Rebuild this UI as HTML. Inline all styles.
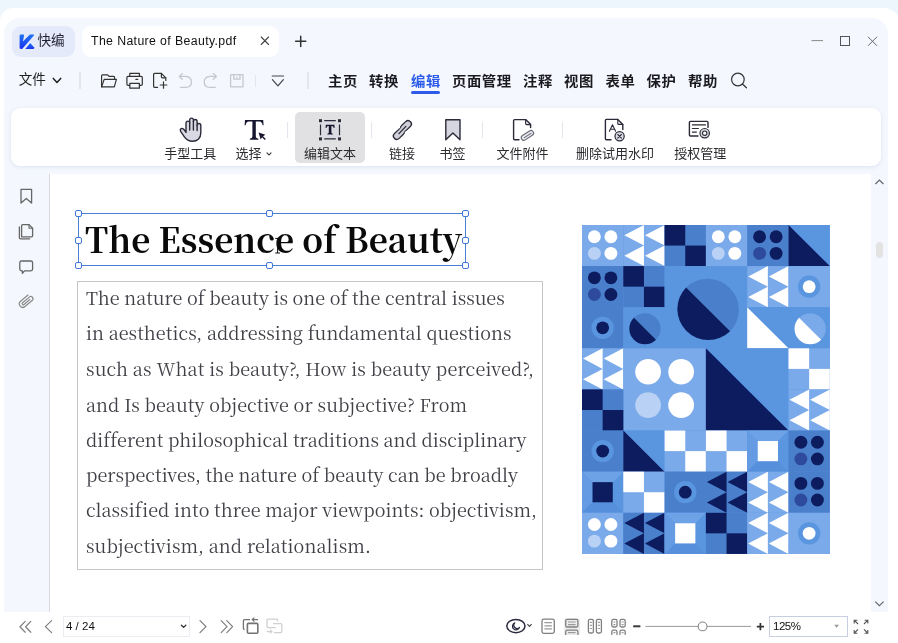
<!DOCTYPE html>
<html lang="zh-CN">
<head>
<meta charset="utf-8">
<title>The Nature of Beauty.pdf</title>
<style>
*{box-sizing:border-box;margin:0;padding:0}
html,body{width:898px;height:643px;overflow:hidden}
body{position:relative;background:#edf6fd;font-family:"Liberation Sans","Noto Sans CJK SC",sans-serif;color:#222;font-size:13px}
.abs{position:absolute}
#wrap{position:absolute;left:0;top:0;width:898px;height:643px;will-change:transform}
#frame{left:0;top:8px;width:900px;height:640px;background:#fff;border-radius:13px 16px 0 0}
#inner{left:4px;top:18px;width:884px;height:594px;background:#f4f7fd;border-radius:16px 16px 0 0}
#logotab{left:12px;top:26px;width:63px;height:31px;border-radius:9px;background:#e5eafb}
#doctab{left:82px;top:26px;width:197px;height:31px;border-radius:9px;background:#fff}
.cn{font-family:"Liberation Sans","Noto Sans CJK SC",sans-serif}
.t{position:absolute;white-space:nowrap;line-height:1}
.menu{font-weight:700;font-size:14.4px;color:#1b1b1f;letter-spacing:.5px;transform:scaleY(.92);transform-origin:0 50%}
#ribbon{left:11px;top:108px;width:870px;height:58px;background:#fff;border-radius:9px;box-shadow:0 1px 4px rgba(120,140,200,.18)}
#sel{left:295px;top:112px;width:70px;height:51px;background:#e1e1e3;border-radius:5px}
.lbl{font-size:13px;color:#2c2c30}
.sep{position:absolute;width:1px;background:#e4e6ed}
#page{left:49px;top:174px;width:822px;height:438px;background:#fff;border-left:1px solid #d9dae0}
#scroll{left:871px;top:174px;width:17px;height:438px;background:#f4f7fd}
.serif{font-family:"Noto Serif CJK SC","Liberation Serif",serif}
#title{left:85.3px;top:221px;font-size:34.5px;font-weight:700;color:#0a0a0a;transform-origin:0 0;transform:scaleX(.968)}
.bl{left:86px;font-size:18px;color:#3f3f46}
#tbox{left:77px;top:281px;width:466px;height:289px;border:1px solid #c6c6c6}
#selbox{left:78px;top:213px;width:388px;height:53px;border:1px solid #4a7fd6}
.h{position:absolute;width:7px;height:7px;border:1.2px solid #3f78d8;background:#fff;border-radius:2px}
svg{position:absolute;overflow:visible}
#ov{left:0;top:0}
.ic{fill:none;stroke:#333;stroke-width:1.2;stroke-linecap:round;stroke-linejoin:round}
.icg{fill:none;stroke:#c6c8ce;stroke-width:1.3;stroke-linecap:round;stroke-linejoin:round}
.rb{fill:none;stroke:#2a2a38;stroke-width:1.4;stroke-linecap:round;stroke-linejoin:round}
.sb{fill:none;stroke:#666;stroke-width:1.3;stroke-linecap:round;stroke-linejoin:round}
.st{fill:none;stroke:#808080;stroke-width:1.2;stroke-linecap:round;stroke-linejoin:round}
</style>
</head>
<body>
<div id="wrap">
<div id="frame" class="abs"></div>
<div id="inner" class="abs"></div>

<!-- title bar -->
<div id="logotab" class="abs"></div>
<div id="doctab" class="abs"></div>
<div class="t cn" style="left:37.4px;top:34.2px;font-size:13.6px;color:#1f2330">快编</div>
<div class="t" style="left:91px;top:35px;font-size:12.3px;color:#111;letter-spacing:.38px">The Nature of Beauty.pdf</div>

<!-- menu row -->
<div class="t cn" style="left:18.7px;top:73.2px;font-size:13.6px;color:#222">文件</div>
<div class="sep" style="left:79.4px;top:72px;height:17px;width:1.3px"></div>
<div class="sep" style="left:255px;top:75px;height:12px"></div>
<div class="sep" style="left:307px;top:72px;height:17px;width:1.5px"></div>
<div class="t cn menu" style="left:328px;top:74px">主页</div>
<div class="t cn menu" style="left:369px;top:74px">转换</div>
<div class="t cn menu" style="left:411px;top:74px;color:#2b5be8">编辑</div>
<div class="t cn menu" style="left:452px;top:74px">页面管理</div>
<div class="t cn menu" style="left:523px;top:74px">注释</div>
<div class="t cn menu" style="left:564px;top:74px">视图</div>
<div class="t cn menu" style="left:605.5px;top:74px">表单</div>
<div class="t cn menu" style="left:646.5px;top:74px">保护</div>
<div class="t cn menu" style="left:688px;top:74px">帮助</div>
<div class="abs" style="left:411px;top:91.2px;width:29px;height:2.7px;border-radius:2px;background:#2b5be8"></div>

<!-- ribbon -->
<div id="ribbon" class="abs"></div>
<div id="sel" class="abs"></div>
<div class="sep" style="left:287px;top:122px;height:16px"></div>
<div class="sep" style="left:371px;top:122px;height:16px"></div>
<div class="sep" style="left:482px;top:122px;height:16px"></div>
<div class="sep" style="left:562px;top:122px;height:16px"></div>
<div class="t cn lbl" style="left:164.2px;top:147px">手型工具</div>
<div class="t cn lbl" style="left:235.4px;top:147px">选择</div>
<div class="t cn lbl" style="left:303.9px;top:147px">编辑文本</div>
<div class="t cn lbl" style="left:388.9px;top:147px">链接</div>
<div class="t cn lbl" style="left:439.6px;top:147px">书签</div>
<div class="t cn lbl" style="left:496.6px;top:147px">文件附件</div>
<div class="t cn lbl" style="left:576.1px;top:147px">删除试用水印</div>
<div class="t cn lbl" style="left:674.3px;top:147px">授权管理</div>

<!-- document area -->
<div id="page" class="abs"></div>
<div id="scroll" class="abs"></div>
<div class="abs" style="left:876px;top:242px;width:7px;height:16px;border-radius:4px;background:#e3e3e3"></div>
<div id="tbox" class="abs"></div>
<div id="selbox" class="abs"></div>
<div class="h" style="left:75px;top:210px"></div>
<div class="h" style="left:266px;top:210px"></div>
<div class="h" style="left:462px;top:210px"></div>
<div class="h" style="left:75px;top:237px"></div>
<div class="h" style="left:462px;top:237px"></div>
<div class="h" style="left:75px;top:262px"></div>
<div class="h" style="left:266px;top:262px"></div>
<div class="h" style="left:462px;top:262px"></div>
<div id="title" class="t serif">The Essence of Beauty</div>
<div class="t serif bl" style="top:288px">The nature of beauty is one of the central issues</div>
<div class="t serif bl" style="top:323px;letter-spacing:0.052px">in aesthetics, addressing fundamental questions</div>
<div class="t serif bl" style="top:359px;letter-spacing:0.135px">such as What is beauty?, How is beauty perceived?,</div>
<div class="t serif bl" style="top:395px;letter-spacing:0.09px">and Is beauty objective or subjective? From</div>
<div class="t serif bl" style="top:430px;letter-spacing:0.02px">different philosophical traditions and disciplinary</div>
<div class="t serif bl" style="top:465px;letter-spacing:0.02px">perspectives, the nature of beauty can be broadly</div>
<div class="t serif bl" style="top:500px;letter-spacing:0.045px">classified into three major viewpoints: objectivism,</div>
<div class="t serif bl" style="top:536px;letter-spacing:0.085px">subjectivism, and relationalism.</div>
<svg id="art" style="left:582.4px;top:224.8px;overflow:hidden" width="247.8" height="328.9" preserveAspectRatio="none" viewBox="0 0 246.6 328.8"><rect x="0" y="0" width="246.6" height="328.8" fill="#5a95e0"/><rect x="0" y="0" width="41.1" height="41.1" fill="#7aaae9"/><circle cx="12.33" cy="11.71" r="6.41" fill="#ffffff"/><circle cx="28.77" cy="11.71" r="6.41" fill="#ffffff"/><circle cx="12.33" cy="28.36" r="6.41" fill="#b8d1f4"/><circle cx="28.77" cy="28.36" r="6.41" fill="#ffffff"/><rect x="41.1" y="0" width="41.1" height="41.1" fill="#7aaae9"/><path d="M61.65 0L61.65 20.55L42.1 10.28z" fill="#ffffff"/><path d="M61.65 20.55L61.65 41.1L42.1 30.83z" fill="#ffffff"/><path d="M82.2 0L82.2 20.55L62.65 10.28z" fill="#ffffff"/><path d="M82.2 20.55L82.2 41.1L62.65 30.83z" fill="#ffffff"/><rect x="82.2" y="0" width="41.1" height="41.1" fill="#4a7fcc"/><rect x="82.2" y="0" width="20.55" height="20.55" fill="#0c1c5e"/><rect x="102.75" y="20.55" width="20.55" height="20.55" fill="#0c1c5e"/><rect x="123.3" y="0" width="41.1" height="41.1" fill="#7aaae9"/><circle cx="135.63" cy="11.71" r="6.41" fill="#ffffff"/><circle cx="152.07" cy="11.71" r="6.41" fill="#ffffff"/><circle cx="135.63" cy="28.36" r="6.41" fill="#b8d1f4"/><circle cx="152.07" cy="28.36" r="6.41" fill="#ffffff"/><rect x="164.4" y="0" width="41.1" height="41.1" fill="#4a7fcc"/><circle cx="176.73" cy="11.71" r="6.41" fill="#0c1c5e"/><circle cx="193.17" cy="11.71" r="6.41" fill="#0c1c5e"/><circle cx="176.73" cy="28.36" r="6.41" fill="#2e4a9c"/><circle cx="193.17" cy="28.36" r="6.41" fill="#0c1c5e"/><rect x="205.5" y="0" width="41.1" height="41.1" fill="#5a95e0"/><path d="M205.5 0L205.5 41.1L246.6 41.1z" fill="#0c1c5e"/><rect x="0" y="41.1" width="41.1" height="41.1" fill="#4a7fcc"/><circle cx="12.33" cy="52.81" r="6.41" fill="#0c1c5e"/><circle cx="28.77" cy="52.81" r="6.41" fill="#0c1c5e"/><circle cx="12.33" cy="69.46" r="6.41" fill="#2e4a9c"/><circle cx="28.77" cy="69.46" r="6.41" fill="#0c1c5e"/><rect x="41.1" y="41.1" width="41.1" height="41.1" fill="#4a7fcc"/><rect x="41.1" y="41.1" width="20.55" height="20.55" fill="#0c1c5e"/><rect x="61.65" y="61.65" width="20.55" height="20.55" fill="#0c1c5e"/><rect x="82.2" y="41.1" width="82.2" height="82.2" fill="#5a95e0"/><path d="M103.59 62.49A30.99 30.99 0 0 1 147.41 106.31z" fill="#4a7fcc"/><path d="M147.41 106.31A30.99 30.99 0 0 1 103.59 62.49z" fill="#0c1c5e"/><rect x="164.4" y="41.1" width="41.1" height="41.1" fill="#7aaae9"/><path d="M184.95 41.1L184.95 61.65L165.4 51.38z" fill="#ffffff"/><path d="M184.95 61.65L184.95 82.2L165.4 71.93z" fill="#ffffff"/><path d="M205.5 41.1L205.5 61.65L185.95 51.38z" fill="#ffffff"/><path d="M205.5 61.65L205.5 82.2L185.95 71.93z" fill="#ffffff"/><rect x="205.5" y="41.1" width="41.1" height="41.1" fill="#7aaae9"/><circle cx="226.05" cy="61.65" r="11.1" fill="#5a95e0"/><circle cx="226.05" cy="61.65" r="6.37" fill="#ffffff"/><rect x="0" y="82.2" width="41.1" height="41.1" fill="#4a7fcc"/><circle cx="20.55" cy="102.75" r="11.1" fill="#5a95e0"/><circle cx="20.55" cy="102.75" r="6.37" fill="#0c1c5e"/><rect x="41.1" y="82.2" width="41.1" height="41.1" fill="#5a95e0"/><path d="M51.66 92.76A15.54 15.54 0 0 1 73.64 114.74z" fill="#4a7fcc"/><path d="M73.64 114.74A15.54 15.54 0 0 1 51.66 92.76z" fill="#0c1c5e"/><rect x="164.4" y="82.2" width="41.1" height="41.1" fill="#5a95e0"/><path d="M164.4 82.2L164.4 123.3L205.5 123.3z" fill="#ffffff"/><rect x="205.5" y="82.2" width="41.1" height="41.1" fill="#5a95e0"/><path d="M216.06 92.76A15.54 15.54 0 0 1 238.04 114.74z" fill="#7aaae9"/><path d="M238.04 114.74A15.54 15.54 0 0 1 216.06 92.76z" fill="#ffffff"/><rect x="0" y="123.3" width="41.1" height="41.1" fill="#7aaae9"/><path d="M20.55 123.3L20.55 143.85L1 133.58z" fill="#ffffff"/><path d="M20.55 143.85L20.55 164.4L1 154.13z" fill="#ffffff"/><path d="M41.1 123.3L41.1 143.85L21.55 133.58z" fill="#ffffff"/><path d="M41.1 143.85L41.1 164.4L21.55 154.13z" fill="#ffffff"/><rect x="41.1" y="123.3" width="82.2" height="82.2" fill="#7aaae9"/><circle cx="65.76" cy="146.73" r="12.82" fill="#ffffff"/><circle cx="98.64" cy="146.73" r="12.82" fill="#ffffff"/><circle cx="65.76" cy="180.02" r="12.82" fill="#b8d1f4"/><circle cx="98.64" cy="180.02" r="12.82" fill="#ffffff"/><rect x="123.3" y="123.3" width="82.2" height="82.2" fill="#5a95e0"/><path d="M123.3 123.3L123.3 205.5L205.5 205.5z" fill="#0c1c5e"/><rect x="205.5" y="123.3" width="41.1" height="41.1" fill="#7aaae9"/><rect x="205.5" y="123.3" width="20.55" height="20.55" fill="#ffffff"/><rect x="226.05" y="143.85" width="20.55" height="20.55" fill="#ffffff"/><rect x="0" y="164.4" width="41.1" height="41.1" fill="#4a7fcc"/><rect x="0" y="164.4" width="20.55" height="20.55" fill="#0c1c5e"/><rect x="20.55" y="184.95" width="20.55" height="20.55" fill="#0c1c5e"/><rect x="205.5" y="164.4" width="41.1" height="41.1" fill="#7aaae9"/><path d="M226.05 164.4L226.05 184.95L206.5 174.68z" fill="#ffffff"/><path d="M226.05 184.95L226.05 205.5L206.5 195.23z" fill="#ffffff"/><path d="M246.6 164.4L246.6 184.95L227.05 174.68z" fill="#ffffff"/><path d="M246.6 184.95L246.6 205.5L227.05 195.23z" fill="#ffffff"/><rect x="0" y="205.5" width="41.1" height="41.1" fill="#4a7fcc"/><circle cx="20.55" cy="226.05" r="11.1" fill="#5a95e0"/><circle cx="20.55" cy="226.05" r="6.37" fill="#0c1c5e"/><rect x="41.1" y="205.5" width="41.1" height="41.1" fill="#5a95e0"/><path d="M41.1 205.5L41.1 246.6L82.2 246.6z" fill="#0c1c5e"/><rect x="82.2" y="205.5" width="41.1" height="41.1" fill="#7aaae9"/><rect x="82.2" y="205.5" width="20.55" height="20.55" fill="#ffffff"/><rect x="102.75" y="226.05" width="20.55" height="20.55" fill="#ffffff"/><rect x="123.3" y="205.5" width="41.1" height="41.1" fill="#7aaae9"/><rect x="123.3" y="205.5" width="20.55" height="20.55" fill="#ffffff"/><rect x="143.85" y="226.05" width="20.55" height="20.55" fill="#ffffff"/><rect x="164.4" y="205.5" width="41.1" height="41.1" fill="#5a95e0"/><path d="M164.4 205.5L205.5 205.5L195.02 215.98L174.88 215.98z" fill="#6ea2e6"/><path d="M164.4 205.5L174.88 215.98L174.88 236.12L164.4 246.6z" fill="#659be3"/><path d="M164.4 246.6L205.5 246.6L195.02 236.12L174.88 236.12z" fill="#5690dc"/><rect x="174.88" y="215.98" width="20.14" height="20.14" fill="#ffffff"/><rect x="205.5" y="205.5" width="41.1" height="41.1" fill="#4a7fcc"/><circle cx="217.83" cy="217.21" r="6.41" fill="#0c1c5e"/><circle cx="234.27" cy="217.21" r="6.41" fill="#0c1c5e"/><circle cx="217.83" cy="233.86" r="6.41" fill="#2e4a9c"/><circle cx="234.27" cy="233.86" r="6.41" fill="#0c1c5e"/><rect x="0" y="246.6" width="41.1" height="41.1" fill="#5a95e0"/><path d="M0 246.6L41.1 246.6L30.62 257.08L10.48 257.08z" fill="#6ea2e6"/><path d="M0 246.6L10.48 257.08L10.48 277.22L0 287.7z" fill="#659be3"/><path d="M0 287.7L41.1 287.7L30.62 277.22L10.48 277.22z" fill="#5690dc"/><rect x="10.48" y="257.08" width="20.14" height="20.14" fill="#0c1c5e"/><rect x="41.1" y="246.6" width="41.1" height="41.1" fill="#7aaae9"/><rect x="41.1" y="246.6" width="20.55" height="20.55" fill="#ffffff"/><rect x="61.65" y="267.15" width="20.55" height="20.55" fill="#ffffff"/><rect x="82.2" y="246.6" width="41.1" height="41.1" fill="#4a7fcc"/><circle cx="102.75" cy="267.15" r="11.1" fill="#5a95e0"/><circle cx="102.75" cy="267.15" r="6.37" fill="#0c1c5e"/><rect x="123.3" y="246.6" width="41.1" height="41.1" fill="#4a7fcc"/><path d="M143.85 246.6L143.85 267.15L124.3 256.88z" fill="#0c1c5e"/><path d="M143.85 267.15L143.85 287.7L124.3 277.43z" fill="#0c1c5e"/><path d="M164.4 246.6L164.4 267.15L144.85 256.88z" fill="#0c1c5e"/><path d="M164.4 267.15L164.4 287.7L144.85 277.43z" fill="#0c1c5e"/><rect x="164.4" y="246.6" width="41.1" height="41.1" fill="#7aaae9"/><path d="M184.95 246.6L184.95 267.15L165.4 256.88z" fill="#ffffff"/><path d="M184.95 267.15L184.95 287.7L165.4 277.43z" fill="#ffffff"/><path d="M205.5 246.6L205.5 267.15L185.95 256.88z" fill="#ffffff"/><path d="M205.5 267.15L205.5 287.7L185.95 277.43z" fill="#ffffff"/><rect x="205.5" y="246.6" width="41.1" height="41.1" fill="#4a7fcc"/><circle cx="217.83" cy="258.31" r="6.41" fill="#0c1c5e"/><circle cx="234.27" cy="258.31" r="6.41" fill="#0c1c5e"/><circle cx="217.83" cy="274.96" r="6.41" fill="#2e4a9c"/><circle cx="234.27" cy="274.96" r="6.41" fill="#0c1c5e"/><rect x="0" y="287.7" width="41.1" height="41.1" fill="#7aaae9"/><circle cx="12.33" cy="299.41" r="6.41" fill="#ffffff"/><circle cx="28.77" cy="299.41" r="6.41" fill="#ffffff"/><circle cx="12.33" cy="316.06" r="6.41" fill="#b8d1f4"/><circle cx="28.77" cy="316.06" r="6.41" fill="#ffffff"/><rect x="41.1" y="287.7" width="41.1" height="41.1" fill="#4a7fcc"/><path d="M61.65 287.7L61.65 308.25L42.1 297.97z" fill="#0c1c5e"/><path d="M61.65 308.25L61.65 328.8L42.1 318.52z" fill="#0c1c5e"/><path d="M82.2 287.7L82.2 308.25L62.65 297.97z" fill="#0c1c5e"/><path d="M82.2 308.25L82.2 328.8L62.65 318.52z" fill="#0c1c5e"/><rect x="82.2" y="287.7" width="41.1" height="41.1" fill="#5a95e0"/><path d="M82.2 287.7L123.3 287.7L112.82 298.18L92.68 298.18z" fill="#6ea2e6"/><path d="M82.2 287.7L92.68 298.18L92.68 318.32L82.2 328.8z" fill="#659be3"/><path d="M82.2 328.8L123.3 328.8L112.82 318.32L92.68 318.32z" fill="#5690dc"/><rect x="92.68" y="298.18" width="20.14" height="20.14" fill="#ffffff"/><rect x="123.3" y="287.7" width="41.1" height="41.1" fill="#4a7fcc"/><rect x="123.3" y="287.7" width="20.55" height="20.55" fill="#0c1c5e"/><rect x="143.85" y="308.25" width="20.55" height="20.55" fill="#0c1c5e"/><rect x="164.4" y="287.7" width="41.1" height="41.1" fill="#7aaae9"/><path d="M184.95 287.7L184.95 308.25L165.4 297.97z" fill="#ffffff"/><path d="M184.95 308.25L184.95 328.8L165.4 318.52z" fill="#ffffff"/><path d="M205.5 287.7L205.5 308.25L185.95 297.97z" fill="#ffffff"/><path d="M205.5 308.25L205.5 328.8L185.95 318.52z" fill="#ffffff"/><rect x="205.5" y="287.7" width="41.1" height="41.1" fill="#7aaae9"/><circle cx="226.05" cy="308.25" r="11.1" fill="#5a95e0"/><circle cx="226.05" cy="308.25" r="6.37" fill="#ffffff"/></svg>

<!-- status bar -->
<div class="abs" style="left:63px;top:616px;width:127px;height:21px;background:#fff;border:1px solid #eaecf2"></div>
<div class="t" style="left:66px;top:621px;font-size:11.5px;color:#111">4 / 24</div>
<div class="abs" style="left:563.5px;top:617.5px;width:16.5px;height:17.5px;background:#ececec;border-radius:2px"></div>
<div class="abs" style="left:769px;top:616px;width:79px;height:21px;background:#fff;border:1px solid #c9cde0"></div>
<div class="t" style="left:773px;top:620.8px;font-size:11.5px;color:#111;letter-spacing:-.5px">125%</div>

<svg id="ov" width="898" height="643" viewBox="0 0 898 643">
<defs><linearGradient id="kg" x1="0" y1="0" x2="0" y2="1"><stop offset="0" stop-color="#1f74f5"/><stop offset="1" stop-color="#1a34ee"/></linearGradient></defs>
<!-- logo -->
<path d="M20.7 34.4H23.2Q24.3 34.4 24.1 35.5L22.9 41.4L29.9 34.4H33.5Q34.6 34.4 33.9 35.6L22.6 48.4Q22.2 48.9 21.4 48.9H20.7Q19.6 48.9 19.6 47.8V35.5Q19.6 34.4 20.7 34.4z" fill="url(#kg)"/>
<path d="M30.2 42.9L34 47.3Q34.6 48.9 33.3 48.9H25.3z" fill="url(#kg)"/>
<!-- tab close / plus / window controls -->
<path class="ic" style="stroke-width:1.1;stroke:#444" d="M261.2 37L268.6 44.5M268.6 37L261.2 44.5"/>
<path class="ic" style="stroke-width:1.5" d="M295.6 41.3H305.8M300.7 36.2V46.4"/>
<path d="M811.5 40.6H823" stroke="#8a8a8a" stroke-width="1" fill="none"/>
<rect x="840.5" y="36.5" width="9" height="9" stroke="#555" stroke-width="1" fill="none"/>
<path d="M868 36.8L877 45.8M877 36.8L868 45.8" stroke="#666" stroke-width="1" fill="none"/>
<!-- file chevron -->
<path class="ic" style="stroke:#222;stroke-width:1.5" d="M53.3 78.4L57 82.4L60.7 78.4"/>
<!-- folder -->
<path class="ic" d="M101.6 86.8V75.8Q101.6 74.8 102.6 74.8H107.6L109 76.4H113.6Q114.6 76.4 114.6 77.4V79.3"/>
<path class="ic" d="M104.2 79.4H116.4L114.3 86.9H101.6z"/>
<!-- printer -->
<path class="ic" d="M129.8 76.3V73.3H139.4V76.3"/>
<path class="ic" d="M129.8 85.3H128Q126.9 85.3 126.9 84.2V77.4Q126.9 76.3 128 76.3H141.2Q142.3 76.3 142.3 77.4V84.2Q142.3 85.3 141.2 85.3H139.4"/>
<path class="ic" d="M129.8 83.3H139.4V88.2H129.8z"/>
<path class="ic" d="M135.8 79.3H137.8"/>
<!-- new doc -->
<path class="ic" d="M157.6 87.3H154.6Q153.6 87.3 153.6 86.3V74.4Q153.6 73.4 154.6 73.4H161.4L165.8 77.8V80.4"/>
<path class="ic" d="M161.4 73.4V76.8Q161.4 77.8 162.4 77.8H165.8"/>
<path class="ic" d="M160.2 85H166.8M163.5 81.8V88.2"/>
<!-- undo / redo -->
<path class="icg" d="M182.4 73.6L179.2 76.4L182.4 79.2M179.4 76.4H185.6Q191.4 76.8 191.4 82Q191.4 87.2 185.6 87.4H180.4"/>
<path class="icg" d="M213.2 73.6L216.4 76.4L213.2 79.2M216.2 76.4H210Q204.2 76.8 204.2 82Q204.2 87.2 210 87.4H215.2"/>
<!-- save -->
<path class="icg" d="M230.6 74.6H243V86.8H230.6z"/>
<path class="icg" d="M233.8 74.6V79.2H240V74.6"/>
<path class="icg" d="M236.6 77.2H237.2"/>
<!-- dropdown -->
<path class="ic" style="stroke:#444" d="M272.2 76H283.6M272.4 79.6L277.9 85.9L283.4 79.6"/>
<!-- search -->
<circle class="ic" cx="737.9" cy="79.5" r="6.3"/><path class="ic" d="M742.5 84L746.4 87.8"/>

<!-- hand -->
<path class="rb" style="fill:#d9d9e3" d="M186 132.4V123a1.85 1.85 0 0 1 3.7 0V120a1.85 1.85 0 0 1 3.7 0V121.4a1.85 1.85 0 0 1 3.7 0V125.4a1.85 1.85 0 0 1 3.7 0V133C200.8 138.6 197 141.2 192.6 141.2C188.8 141.2 186.4 139.8 184.4 136.8L180.8 131.6Q179.6 129.6 181.2 128.7Q182.8 128 184.2 129.8z"/>
<path class="rb" d="M189.7 123V130M193.4 121.4V130M197.1 125.4V130.6"/>
<!-- T select -->
<path d="M245 120H263.2L263.6 125.2H262.6Q262 121.6 259.4 121.5H255.8V136.6Q255.8 138.6 258.4 138.8V139.8H249.8V138.8Q252.4 138.6 252.4 136.6V121.5H248.8Q246.2 121.6 245.6 125.2H244.6z" fill="#15152e"/>
<path d="M258.6 132.6L265.4 134.8L263 136.2L265.8 139L264.8 140L262 137.2L260.6 139.6z" fill="#15152e"/>
<path class="ic" style="stroke-width:1.1" d="M267 152.8L269 155L271 152.8"/>
<!-- edit text -->
<rect x="320.5" y="120.7" width="19" height="18.2" fill="#dbdbe3"/><g fill="#2a2a38"><rect x="319" y="119.2" width="3" height="3"/><rect x="338" y="119.2" width="3" height="3"/><rect x="319" y="137.4" width="3" height="3"/><rect x="338" y="137.4" width="3" height="3"/></g>
<path d="M324.2 120.7H335.8M324.2 138.9H335.8M320.5 124.4V135.2M339.5 124.4V135.2" stroke="#2a2a38" stroke-width="1.2" fill="none"/>
<path d="M325.8 124.8H334.4L334.6 128H333.8Q333.4 126 331.8 125.9H331.4V132.6Q331.4 133.6 332.8 133.7V134.6H327.4V133.7Q328.8 133.6 328.8 132.6V125.9H328.4Q326.8 126 326.4 128H325.6z" fill="#15152e"/>
<!-- link -->
<g transform="translate(402.4 130) rotate(-43)"><rect x="-11.5" y="-2.9" width="12" height="6.8" rx="3.4" class="rb" style="fill:#d0d0da;stroke-width:1.3"/><rect x="-0.5" y="-3.9" width="12" height="6.8" rx="3.4" class="rb" style="fill:#d0d0da;stroke-width:1.3"/><path d="M-2.6 -2.1L3 -3.1V1.9L-2.6 3z" fill="#d0d0da"/><path class="rb" style="stroke-width:1.3" d="M-5 0.3L5 -0.3"/></g>
<!-- bookmark -->
<path class="rb" style="fill:#d6d6e0" d="M445.8 119.8H460V139.8L452.9 133L445.8 139.8z"/>
<!-- attach doc -->
<path class="rb" d="M519 139.8H514.6Q513.6 139.8 513.6 138.8V120.6Q513.6 119.6 514.6 119.6H525.6L530.6 124.6V127.6"/>
<path class="rb" style="fill:#e4e4ea;stroke-width:1.1" d="M525.6 119.6V123.6Q525.6 124.6 526.6 124.6H530.6z"/>
<g transform="translate(527.4 135.4) rotate(-33)"><rect x="-6.8" y="-2.6" width="13.6" height="5.2" rx="2.6" fill="#e8e8ee" stroke="#666a75" stroke-width="1.1"/><path d="M-4.2 0.2H4.6" stroke="#666a75" stroke-width="1" fill="none"/></g>
<!-- remove watermark -->
<path class="rb" d="M611 139.8H606.4Q605.4 139.8 605.4 138.8V120.4Q605.4 119.4 606.4 119.4H617.8L622.8 124.4V129.6"/>
<path class="rb" style="stroke-width:1.1" d="M617.8 119.4V123.4Q617.8 124.4 618.8 124.4H622.8"/>
<path class="rb" style="stroke-width:1.1" d="M609.4 131.2L612.5 124.8L615.6 131.2M610.4 129.2H614.6"/>
<circle cx="619.6" cy="136.3" r="4.6" class="rb" style="fill:#dcdce4;stroke-width:1.2"/>
<path class="rb" style="stroke-width:1.1" d="M617.8 134.5L621.4 138.1M621.4 134.5L617.8 138.1"/>
<!-- license -->
<path class="rb" d="M698 136H690.4Q689.4 136 689.4 135V122.4Q689.4 121.4 690.4 121.4H707Q708 121.4 708 122.4V127.4"/>
<path class="rb" style="stroke-width:1.2" d="M692.4 124.9H705.4M692.4 128.5H698.4M692.4 132.1H696.4"/>
<circle cx="704.7" cy="133.2" r="4.7" class="rb" style="fill:#dcdce4;stroke-width:1.2"/>
<circle cx="704.7" cy="133.2" r="2.2" class="rb" style="fill:#fff;stroke-width:1.1"/>

<!-- sidebar icons -->
<path class="sb" d="M21 189.4H31.6V203L26.3 198.4L21 203z"/>
<path class="sb" d="M21.6 236.8V225.6Q21.6 224.6 22.6 224.6H29L32.6 228.2V235.8Q32.6 236.8 31.6 236.8z"/>
<path class="sb" style="stroke-width:1.1" d="M29 224.6V228.2H32.6"/>
<path class="sb" d="M19.4 227V237.8Q19.4 238.8 20.4 238.8H29.6"/>
<path class="sb" d="M21.6 261H30.8Q32.6 261 32.6 262.8V269Q32.6 270.8 30.8 270.8H24.6L22.4 273.4V270.8H21.6Q19.8 270.8 19.8 269V262.8Q19.8 261 21.6 261z"/>
<g transform="translate(26 301.2) rotate(-40)"><path d="M5.5 -3.4H-4.2Q-7.6 -3.4 -7.6 0Q-7.6 3.4 -4.2 3.4H5.2Q7.4 3.4 7.4 1.2Q7.4 -1 5.2 -1H-3.6Q-4.8 -1 -4.8 0.2Q-4.8 1.2 -3.6 1.2H4" fill="none" stroke="#8a8a8a" stroke-width="1.2" stroke-linecap="round"/></g>
<!-- scrollbar arrows -->
<path d="M875.4 184L879.4 180L883.4 184" stroke="#666" stroke-width="1.2" fill="none"/>
<path d="M875.2 601.6L879.4 605.6L883.6 601.6" stroke="#666" stroke-width="1.2" fill="none"/>
<!-- I-beam cursor -->
<path d="M275.2 238.4H280M275.2 253H280M277.6 238.4V253" stroke="#111" stroke-width="1" fill="none"/>

<!-- status bar icons -->
<path class="st" style="stroke-width:1.25" d="M25.2 621.4L20 626.8L25.2 632.2M30.8 621.4L25.6 626.8L30.8 632.2"/>
<path class="st" style="stroke-width:1.25" d="M51.6 620.6L45.4 626.6L51.6 632.6"/>
<path class="ic" style="stroke-width:1.3" d="M181.4 625.2L183.6 627.4L185.8 625.2"/>
<path class="st" style="stroke-width:1.25" d="M200 620.6L206 626.6L200 632.6"/>
<path class="st" style="stroke-width:1.25" d="M221.2 620.6L227 626.6L221.2 632.6M226.8 620.6L232.6 626.6L226.8 632.6"/>
<rect x="247.4" y="623.4" width="10.4" height="9.8" rx="1" fill="none" stroke="#727272" stroke-width="1.6"/>
<path d="M250 619.6H244.6Q243.4 619.6 243.4 620.8V628.6Q243.4 629.6 244.6 629.6" fill="none" stroke="#727272" stroke-width="1.3"/>
<path d="M258 619.6H252.4M254.4 617.6L252.2 619.6L254.4 621.6" fill="none" stroke="#727272" stroke-width="1.2"/>
<path d="M276 627.6H268Q267 627.6 267 626.6V620.2Q267 619.2 268 619.2H276.6Q277.6 619.2 277.6 620.2V621.6" fill="none" stroke="#d0d0d0" stroke-width="1.3"/>
<path d="M273 623.6H280.8Q281.8 623.6 281.8 624.6V631.6Q281.8 632.6 280.8 632.6H274" fill="none" stroke="#d0d0d0" stroke-width="1.3"/>
<path d="M266.6 631.6H272M270.2 629.8L272 631.6L270.2 633.4" fill="none" stroke="#d0d0d0" stroke-width="1.1"/>
<!-- eye -->
<ellipse cx="515.9" cy="626.1" rx="9.1" ry="6.6" fill="none" stroke="#29293f" stroke-width="1.5"/>
<path d="M514.8 622.9A3.6 3.6 0 1 0 519.5 627.4A2.5 2.5 0 0 1 514.8 622.9z" fill="#c9c9d8" stroke="#29293f" stroke-width="1.2" stroke-linejoin="round"/>
<path d="M527.4 624.2L529.5 626.3L531.6 624.2" fill="none" stroke="#444" stroke-width="1.2"/>
<!-- page layout icons -->
<rect x="542" y="619.2" width="12.3" height="14.1" rx="1.8" class="st" style="stroke-width:1.3"/>
<path d="M544.4 622.7H551.9M544.4 625.8H551.9M544.4 628.9H551.9" stroke="#999" stroke-width="1.3" fill="none"/>
<rect x="565.7" y="619.4" width="12.2" height="7.6" rx="1.6" class="st" style="stroke-width:1.3"/>
<path d="M568 622H575.6M568 624.7H575.6" stroke="#999" stroke-width="1.2" fill="none"/>
<path class="st" style="stroke-width:1.3" d="M565.7 634.4V631.8Q565.7 630.2 567.3 630.2H576.3Q577.9 630.2 577.9 631.8V634.4"/>
<path d="M568 632.6H575.6" stroke="#999" stroke-width="1.2" fill="none"/>
<rect x="588.4" y="619.4" width="5" height="13.6" rx="1.5" class="st" style="stroke-width:1.3"/><rect x="596.4" y="619.4" width="5" height="13.6" rx="1.5" class="st" style="stroke-width:1.3"/>
<path d="M589.9 622.4H591.9M589.9 625.4H591.9M589.9 628.5H591.9M597.9 622.4H599.9M597.9 625.4H599.9M597.9 628.5H599.9" stroke="#999" stroke-width="1.2" fill="none"/>
<rect x="611.8" y="619.4" width="5.2" height="7.6" rx="1.5" class="st" style="stroke-width:1.3"/><rect x="620" y="619.4" width="5.2" height="7.6" rx="1.5" class="st" style="stroke-width:1.3"/>
<path d="M613.4 622H615.4M613.4 624.7H615.4M621.6 622H623.6M621.6 624.7H623.6" stroke="#999" stroke-width="1.2" fill="none"/>
<path class="st" style="stroke-width:1.3" d="M611.8 634.4V631.8Q611.8 630.2 613.4 630.2H615.4Q617 630.2 617 631.8V634.4M620 634.4V631.8Q620 630.2 621.6 630.2H623.6Q625.2 630.2 625.2 631.8V634.4"/>
<path d="M613.4 632.6H615.4M621.6 632.6H623.6" stroke="#999" stroke-width="1.2" fill="none"/>
<!-- zoom slider -->
<path d="M633.2 626.3H640.4" stroke="#3a3a3a" stroke-width="2" fill="none"/>
<path d="M645.4 626.4H751" stroke="#9a9a9a" stroke-width="1" fill="none"/>
<circle cx="702.6" cy="626.4" r="4.4" fill="#fff" stroke="#888" stroke-width="1.1"/>
<path d="M756.8 626.6H764M760.4 623V630.2" stroke="#333" stroke-width="1.7" fill="none"/>
<path d="M834.2 624.8H839L836.6 627.8z" fill="#999"/>
<!-- fullscreen -->
<g fill="none" stroke="#555" stroke-width="1.1"><path d="M854.4 620.4L858 624M854.2 623.4V620.2H857.4"/><path d="M867.6 620.4L864 624M867.8 623.4V620.2H864.6"/><path d="M854.4 633L858 629.4M854.2 630V633.2H857.4"/><path d="M867.6 633L864 629.4M867.8 630V633.2H864.6"/></g>
</svg>
</div>
</body>
</html>
